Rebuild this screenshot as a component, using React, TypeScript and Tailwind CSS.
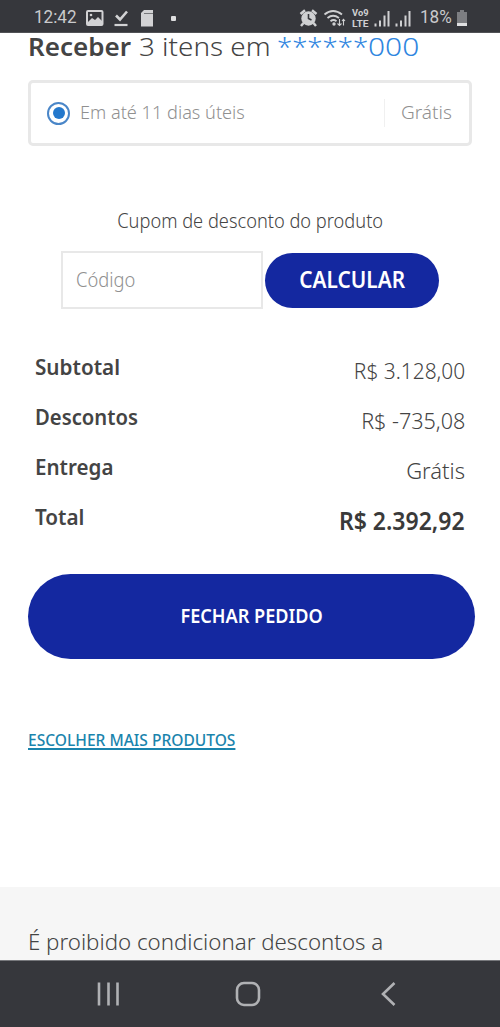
const rows = [
  { label: 'Subtotal', value: 'R$ 3.128,00', labelClass: 'scale-x-[0.94]', valueClass: 'mt-[4px] text-[22px] font-[350] scale-x-[0.95]' },
  { label: 'Descontos', value: 'R$ -735,08', labelClass: 'scale-x-[0.92]', valueClass: 'mt-[4px] text-[22px] font-[350] scale-x-[0.98]' },
  { label: 'Entrega', value: 'Grátis', labelClass: 'scale-x-[0.935]', valueClass: 'mt-[4px] text-[22px] font-[350] scale-x-[1]' },
  { label: 'Total', value: 'R$ 2.392,92', labelClass: 'scale-x-[0.94]', valueClass: 'mt-[3px] text-[25px] font-semibold text-[#3a3a3a] scale-x-[0.92]' },
];

function StatusBar() {
  return (
    <header className="flex h-[33px] shrink-0 items-center justify-between border-b border-[#515256] bg-[#36373c] pt-[3px] pr-[32px] pl-[34px] font-['Roboto',sans-serif] text-[19px] text-[#c9cacc]">
      <div className="flex items-center">
        <span className="w-[52px] origin-left scale-x-[0.9]">12:42</span>
        <svg width="96" height="20" viewBox="86 7 96 20" fill="none" stroke="#d2d2d4" strokeWidth="2">
          <rect x="87" y="10" width="15.500" height="14" rx="1" />
          <path d="M88 21l4-4 3 2 3-3 4 4v3H88z" fill="#d2d2d4" stroke="none" />
          <circle cx="91" cy="14" r="1.300" fill="#d2d2d4" stroke="none" />
          <path d="M116 14.500l4 4 7-8" strokeWidth="2.600" />
          <path d="M114.500 24h13" strokeWidth="2.200" />
          <path d="M144 9h9v16.500h-12V12z" fill="#d2d2d4" stroke="none" />
          <path d="M144 12.500h9" stroke="#77787b" strokeWidth="1" />
          <rect x="171" y="15" width="5" height="5" rx="1" fill="#dededf" stroke="none" />
        </svg>
      </div>
      <div className="flex items-center">
        <svg width="120" height="20" viewBox="298 7 120 20" fill="none" stroke="#cfd0d2" strokeWidth="1.800">
          <circle cx="308.500" cy="17.500" r="7.200" fill="#cfd0d2" stroke="none" />
          <path d="M300.500 13l4.500-3.800M316.500 13l-4.500-3.800M303.500 22l-2.500 3M313.500 22l2.500 3" strokeWidth="2.500" />
          <path d="M308.500 13v4.500l3 1.500" stroke="#36373c" strokeWidth="1.600" />
          <path d="M324.500 13.500q8.500-7 17.500 0M327.500 17q5.500-4.500 11.500 0M330.500 20.300q3-2.500 6 0" />
          <circle cx="334" cy="23" r="1.700" fill="#cfd0d2" stroke="none" />
          <path d="M339.500 18v6.500M337.500 22.500l2 2 2-2M343.500 24.500v-6M342 20l1.500-1.700 1.500 1.700" strokeWidth="1.100" />
          <text x="352" y="15" textLength="16.500" lengthAdjust="spacingAndGlyphs" fontSize="8.300" fontWeight="700" fill="#cfd0d2" stroke="none">Vo9</text>
          <text x="352" y="25.500" textLength="16.500" lengthAdjust="spacingAndGlyphs" fontSize="8.300" fontWeight="700" fill="#cfd0d2" stroke="none">LTE</text>
          <path d="M375.500 25.500v-3M380 25.500v-6M384.500 25.500V14.500M388.500 25.500V10M396.500 25.500v-3M401 25.500v-6M405.500 25.500V14.500M409.500 25.500V10" strokeWidth="2" />
        </svg>
        <span className="ml-[2px] w-[36px] origin-left scale-x-[0.9]">18%</span>
        <svg width="12" height="18" viewBox="0 0 12 18">
          <path d="M4 1h4v2h3v14H1V3h3z" fill="#7d7e82" />
          <path d="M1 14h10v3H1z" fill="#e0e0e2" />
        </svg>
      </div>
    </header>
  );
}

function NavBar() {
  return (
    <nav className="flex h-[67px] shrink-0 items-center border-t border-[#77787c] bg-[#36373c] pl-[96px] text-[#b0b1b4]">
      <svg width="25" height="26" viewBox="0 0 25 26" fill="none" stroke="currentColor" strokeWidth="2.600">
        <path d="M3 1.500v23M12.500 1.500v23M21.500 1.500v23" />
      </svg>
      <svg className="ml-[114px]" width="26" height="26" viewBox="0 0 26 26" fill="none" stroke="currentColor" strokeWidth="2.600">
        <rect x="2" y="2" width="22" height="22" rx="7" />
      </svg>
      <svg className="ml-[119px]" width="16" height="26" viewBox="0 0 16 26" fill="none" stroke="currentColor" strokeWidth="2.600">
        <path d="M14.500 2L3 13l11.500 11" />
      </svg>
    </nav>
  );
}

export default function App() {
  return (
    <div className="flex h-[1027px] w-[500px] flex-col overflow-hidden bg-white font-['Noto_Sans',sans-serif] whitespace-nowrap text-[#444]">
      <StatusBar />
      <main className="flex min-h-0 flex-1 flex-col">
        <section className="flex h-[854px] shrink-0 flex-col px-[28px]">
          <h1 className="flex h-[26px] items-center text-[26px] leading-[26px] font-[350]">
            <span className="w-[111px] font-semibold">Receber</span>
            <span className="w-[138px] origin-left scale-x-[1.07]">3 itens em</span>
            <span className="w-[91px] origin-left scale-x-[1.06] text-[#2f86df]">******</span>
            <span className="origin-left scale-x-[1.15] text-[#2f86df]">000</span>
          </h1>

          <div className="mt-[21px] flex h-[66px] w-[444px] shrink-0 items-center rounded-[5px] border-[3px] border-[#e8e8e8] pl-[16px] text-[19px] text-[#909090]">
            <span className="flex size-[23px] items-center justify-center rounded-full border-[2.500px] border-[#4a86c8]">
              <span className="size-[12px] rounded-full bg-[#2478cc]" />
            </span>
            <span className="-mt-[1px] ml-[10px] w-[304px] origin-left scale-x-[0.955] font-[350]">Em até 11 dias úteis</span>
            <span className="h-[28px] w-px bg-[#f0f0f0]" />
            <span className="-mt-[1px] ml-[16px] font-[350]">Grátis</span>
          </div>

          <p className="mt-[61px] flex h-[28px] items-center justify-center text-[19.500px] font-[350]">
            <span className="scale-x-[0.935]">Cupom de desconto do produto</span>
          </p>

          <div className="mt-[16px] ml-[33px] flex h-[58px] items-center">
            <div className="flex h-[58px] w-[202px] items-center border-2 border-[#e8e8e8] pl-[13px] text-[19.500px] font-[350] text-[#909090]">
              <span className="origin-left scale-x-[0.94]">Código</span>
            </div>
            <button className="ml-[2px] flex h-[55px] w-[174px] items-center justify-center rounded-full bg-[#1428a0] text-[22.500px] font-semibold text-white">
              <span className="scale-x-[0.925]">CALCULAR</span>
            </button>
          </div>

          <div className="mt-[32px] flex flex-col pr-[7px] pl-[7px]">
            {rows.map((row) => (
              <div key={row.label} className="flex h-[50px] items-center justify-between leading-[30px]">
                <span className={`origin-left text-[22px] font-semibold ${row.labelClass}`}>{row.label}</span>
                <span className={`relative top-[2px] origin-right ${row.valueClass}`}>{row.value}</span>
              </div>
            ))}
          </div>

          <button className="mt-[33px] flex h-[85px] w-[447px] shrink-0 items-center justify-center rounded-[43px] bg-[#1428a0] pb-[2px] text-[20px] font-semibold text-white">
            <span className="scale-x-[0.905]">FECHAR PEDIDO</span>
          </button>

          <a className="mt-[69px] flex h-[24px] items-center text-[16.500px] font-medium text-[#1a84ad]" href="#">
            <span className="origin-left scale-x-[0.942] underline decoration-[1.500px] underline-offset-[2px]">ESCOLHER MAIS PRODUTOS</span>
          </a>
        </section>

        <footer className="flex-1 bg-[#f6f6f6] pt-[40px] pl-[28px] text-[22.500px] leading-[30px] font-[350]">
          <span className="inline-block origin-left scale-x-[0.99]">É proibido condicionar descontos a</span>
        </footer>
      </main>
      <NavBar />
    </div>
  );
}
